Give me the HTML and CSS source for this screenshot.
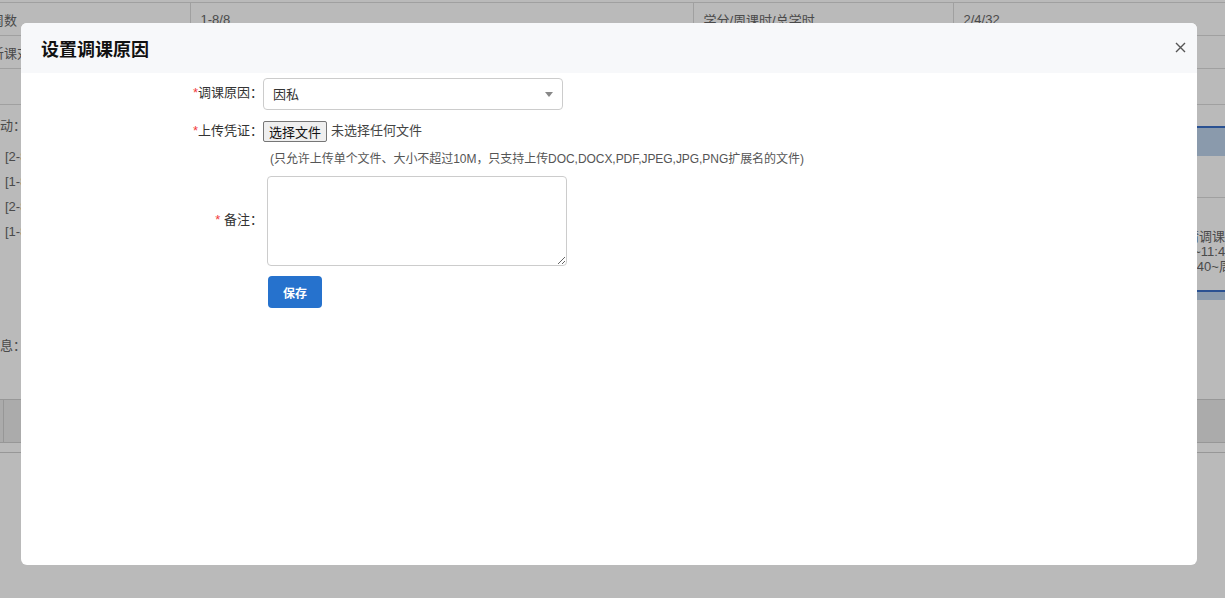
FILE: index.html
```html
<!DOCTYPE html>
<html lang="zh-CN">
<head>
    <meta charset="UTF-8">
    <meta name="viewport" content="width=device-width, initial-scale=1.0">
    <title>设置调课原因</title>
    <link rel="stylesheet" href="styles.css">
</head>
<body>
    <!-- page behind the dialog -->
    <div class="page">
        <table class="info-table">
            <colgroup>
                <col class="col-1">
                <col class="col-2">
                <col class="col-3">
                <col>
            </colgroup>
            <tr>
                <td class="first">周数</td>
                <td>1-8/8</td>
                <td>学分/周课时/总学时</td>
                <td>2/4/32</td>
            </tr>
            <tr>
                <td class="first">听课对象</td>
                <td>计算机科学与技术2班</td>
                <td>上课地点</td>
                <td>教学楼A-301</td>
            </tr>
            <tr class="tall">
                <td class="first"></td>
                <td></td>
                <td></td>
                <td></td>
            </tr>
        </table>

        <div class="detail">
            <div class="detail-left">
                <div class="detail-label">课表变动：</div>
                <ul class="change-list">
                    <li>[2-8周] 周二 第1-2节 教学楼A-301</li>
                    <li>[1-8周] 周四 第3-4节 教学楼A-301</li>
                    <li>[2-8周] 周二 第1-2节 教学楼B-205</li>
                    <li>[1-8周] 周四 第3-4节 教学楼B-205</li>
                </ul>
                <div class="detail-label second">调课信息：</div>
            </div>
            <div class="detail-right">
                <div class="grid-head"></div>
                <div class="grid-row"></div>
                <div class="grid-row big">
                    <div class="grid-text">
                        <div>请调课</div>
                        <div>0~11:40</div>
                        <div>3:40~周三</div>
                    </div>
                </div>
                <div class="grid-head small"></div>
            </div>
        </div>

        <div class="footer-box">
            <div class="footer-cell"></div>
        </div>
        <div class="footer-line"></div>
    </div>

    <div class="mask"></div>

    <!-- dialog -->
    <div class="modal">
        <div class="modal-header">
            <h3 class="modal-title">设置调课原因</h3>
            <span class="modal-close">
                <svg width="11" height="11" viewBox="0 0 11 11">
                    <path d="M1 1 L10 10 M10 1 L1 10" stroke="#555" stroke-width="1.4" fill="none"/>
                </svg>
            </span>
        </div>
        <div class="modal-body">
            <div class="form-row">
                <label class="form-label"><span class="req">*</span>调课原因：</label>
                <div class="select-box">
                    <span class="select-text">因私</span>
                    <span class="caret"></span>
                </div>
            </div>
            <div class="form-row file-row">
                <label class="form-label"><span class="req">*</span>上传凭证：</label>
                <button class="file-btn">选择文件</button>
                <span class="file-name">未选择任何文件</span>
            </div>
            <div class="form-hint">(只允许上传单个文件、大小不超过10M，只支持上传DOC,DOCX,PDF,JPEG,JPG,PNG扩展名的文件)</div>
            <div class="form-row note-row">
                <label class="form-label"><span class="req">*</span> 备注：</label>
                <textarea class="note"></textarea>
            </div>
            <div class="form-row save-row">
                <button class="save-btn">保存</button>
            </div>
        </div>
    </div>
</body>
</html>
```

FILE: styles.css
```css
body {
    margin: 0;
    padding: 0;
    background-color: #fff;
    font-family: "Liberation Sans", "Noto Sans CJK SC", sans-serif;
    font-size: 13px;
    color: #666;
    overflow: hidden;
}

/* background page */
.page {
    margin-left: -9px;
    width: 1240px;
}
.info-table {
    width: 100%;
    border-collapse: collapse;
    table-layout: fixed;
    margin-top: 2px;
}
.col-1 {
    width: 199px;
}
.col-2 {
    width: 503px;
}
.col-3 {
    width: 260px;
}
.info-table td {
    height: 32px;
    padding: 0 10px;
    border: 1px solid #dcdcdc;
    white-space: nowrap;
    overflow: hidden;
}
.info-table td.first {
    padding-left: 0;
    border-left: none;
}
.info-table tr.tall td {
    height: 35px;
}
.detail {
    display: flex;
    margin-left: -65px;
    margin-top: 11px;
}
.detail-left {
    width: 714px;
    flex-shrink: 0;
}
.detail-label {
    width: 100px;
    text-align: right;
    line-height: 20px;
}
.detail-label.second {
    margin-top: 92px;
}
.change-list {
    list-style: none;
    margin: 8px 0 0 79px;
    padding: 0;
}
.change-list li {
    line-height: 25px;
    white-space: nowrap;
}
.detail-right {
    flex: 1;
    min-width: 0;
    overflow: hidden;
    margin-top: 10px;
}
.grid-head {
    height: 28px;
    background-color: #bdd3ec;
    border-top: 2px solid #3a6fc8;
}
.grid-head.small {
    height: 8px;
}
.grid-row {
    height: 41px;
    border-bottom: 1px solid #dcdcdc;
}
.grid-row.big {
    height: 92px;
    border-bottom: none;
}
.grid-text {
    padding-top: 31px;
    padding-left: 546px;
    line-height: 15px;
    white-space: nowrap;
}
.footer-box {
    margin-top: 43px;
    height: 42px;
    background-color: #ebebeb;
    border-top: 1px solid #cfcfcf;
    border-bottom: 1px solid #cfcfcf;
}
.footer-cell {
    margin-left: 12px;
    height: 42px;
    border-right: 1px solid #cfcfcf;
    width: 0;
}
.footer-line {
    margin-top: 9px;
    border-top: 1px solid #cfcfcf;
}

/* mask + dialog */
.mask {
    position: fixed;
    top: 0;
    left: 0;
    right: 0;
    bottom: 0;
    background-color: rgba(0, 0, 0, 0.27);
}
.modal {
    position: fixed;
    left: 21px;
    top: 23px;
    width: 1176px;
    height: 542px;
    background-color: #fff;
    border-radius: 6px;
    overflow: hidden;
}
.modal-header {
    height: 50px;
    background-color: #f7f8fa;
    display: flex;
    align-items: center;
    justify-content: space-between;
    padding: 0 11px 0 20px;
}
.modal-title {
    margin: 0 0 1px;
    font-family: "Noto Sans CJK SC", sans-serif;
    font-size: 18px;
    font-weight: bold;
    color: #111;
}
.modal-close {
    display: flex;
    width: 11px;
    height: 11px;
    margin-top: -1px;
}
.modal-body {
    padding: 5px 20px;
    color: #333;
}
.form-row {
    display: flex;
    align-items: center;
}
.form-label {
    width: 222px;
    text-align: right;
    white-space: nowrap;
    line-height: 18px;
    padding-bottom: 2px;
}
.req {
    color: #f23b3b;
}
.select-box {
    width: 300px;
    height: 32px;
    box-sizing: border-box;
    border: 1px solid #ccc;
    border-radius: 4px;
    padding: 0 9px;
    display: flex;
    align-items: center;
    justify-content: space-between;
    color: #333;
}
.select-text {
    padding-bottom: 2px;
}
.caret {
    width: 0;
    height: 0;
    border-left: 4px solid transparent;
    border-right: 4px solid transparent;
    border-top: 5px solid #888;
}
.file-row {
    margin-top: 11px;
}
.file-btn {
    font-family: "Noto Sans CJK SC", sans-serif;
    font-size: 13px;
    height: 21px;
    padding: 0 5px;
    background-color: #efefef;
    border: 1px solid #767676;
    border-radius: 2px;
    color: #111;
    line-height: 18px;
}
.file-name {
    margin-left: 4px;
    color: #444;
    line-height: 18px;
    padding-bottom: 2px;
}
.form-hint {
    margin-top: 8px;
    margin-left: 229px;
    line-height: 18px;
    font-size: 12px;
    letter-spacing: -0.05px;
    color: #555;
}
.note-row {
    margin-top: 8px;
    align-items: flex-start;
}
.note-row .form-label {
    margin-top: 35px;
}
.note {
    width: 300px;
    height: 90px;
    box-sizing: border-box;
    margin: 0 0 0 4px;
    border: 1px solid #ccc;
    border-radius: 4px;
}
.save-row {
    margin-top: 10px;
    padding-left: 227px;
}
.save-btn {
    width: 54px;
    height: 32px;
    background-color: #2672cd;
    color: #fff;
    border: none;
    border-radius: 4px;
    font-family: "Noto Sans CJK SC", sans-serif;
    font-size: 12px;
    font-weight: bold;
}
```
